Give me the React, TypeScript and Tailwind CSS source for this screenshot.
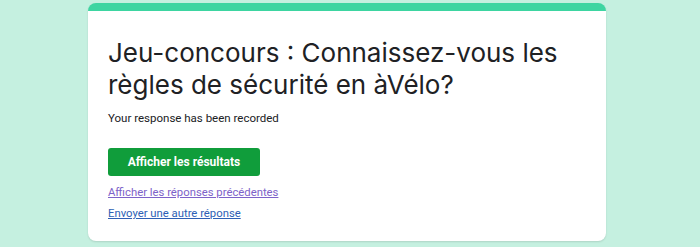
export default function App() {
  return (
    <div className="w-[700px] h-[247px] bg-[#c5f0e0] overflow-hidden pt-[3px] pl-[88px]">
      <div className="w-[518px] h-[238px] bg-white rounded-[8px] border-t-[8px] border-[#3dd5a1] shadow-[0_1px_2px_rgba(0,0,0,0.12)] px-[20px] pt-[26px]" style={{ fontFamily: "Inter, 'Noto Sans', sans-serif" }}>
        <h1 className="text-[26px] leading-[32px] text-[#202124] font-normal">
          Jeu-concours : Connaissez-vous les règles de sécurité en àVélo?
        </h1>
        <p className="mt-[9px] text-[11.5px] leading-[16px] text-[#202124]" style={{ fontFamily: "Roboto, Arial, sans-serif" }}>
          Your response has been recorded
        </p>
        <button className="mt-[22px] w-[152px] h-[28px] rounded-[3px] bg-[#109d3b] text-white text-[12px] font-bold" style={{ fontFamily: "Roboto, Arial, sans-serif" }}>
          Afficher les résultats
        </button>
        <div className="mt-[9px] flex flex-col gap-[5px] text-[11.3px] leading-[16px]" style={{ fontFamily: "Roboto, Arial, sans-serif" }}>
          <a className="underline text-[#7d62c9] w-fit" href="#">Afficher les réponses précédentes</a>
          <a className="underline text-[#2e5fb5] w-fit" href="#">Envoyer une autre réponse</a>
        </div>
      </div>
    </div>
  );
}
